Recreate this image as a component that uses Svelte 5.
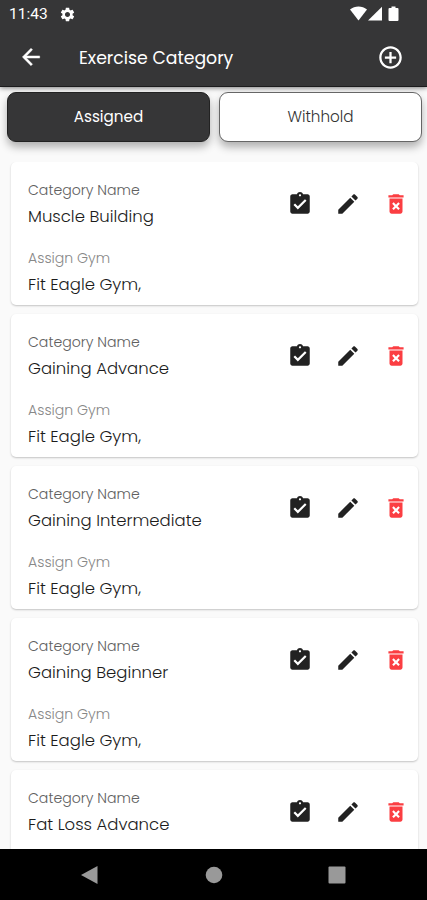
<script>
	const categories = [
		{ name: 'Muscle Building', gym: 'Fit Eagle Gym,' },
		{ name: 'Gaining Advance', gym: 'Fit Eagle Gym,' },
		{ name: 'Gaining Intermediate', gym: 'Fit Eagle Gym,' },
		{ name: 'Gaining Beginner', gym: 'Fit Eagle Gym,' },
		{ name: 'Fat Loss Advance' }
	];
	let tab = $state('assigned');
</script>

<div class="screen">
	<header>
		<div class="status">
			<span class="time">11:43</span>
			<svg class="gear" viewBox="0 0 24 24">
				<path
					d="M19.14 12.94c.04-.3.06-.61.06-.94 0-.32-.02-.64-.07-.94l2.03-1.58c.18-.14.23-.41.12-.61l-1.92-3.32c-.12-.22-.37-.29-.59-.22l-2.39.96c-.5-.38-1.03-.7-1.62-.94L14.4 2.81c-.04-.24-.24-.41-.48-.41h-3.84c-.24 0-.43.17-.47.41L9.25 5.35c-.59.24-1.13.57-1.62.94l-2.39-.96c-.22-.08-.47 0-.59.22L2.74 8.87c-.12.21-.08.47.12.61l2.03 1.58c-.05.3-.09.63-.09.94s.02.64.07.94l-2.03 1.58c-.18.14-.23.41-.12.61l1.92 3.32c.12.22.37.29.59.22l2.39-.96c.5.38 1.03.7 1.62.94l.36 2.54c.05.24.24.41.48.41h3.84c.24 0 .44-.17.47-.41l.36-2.54c.59-.24 1.13-.56 1.62-.94l2.39.96c.22.08.47 0 .59-.22l1.92-3.32c.12-.22.07-.47-.12-.61l-2.01-1.58zM12 15.6c-1.98 0-3.6-1.62-3.6-3.6s1.62-3.6 3.6-3.6 3.6 1.62 3.6 3.6-1.62 3.6-3.6 3.6z"
				/>
			</svg>
			<svg class="signals" viewBox="0 0 50 16">
				<path d="M0 3.5C4.8-.5 12.2-.5 17 3.5L8.5 14.5z" />
				<path d="M18 14.5L32 .8v13.7z" />
				<path d="M39.5 2h2V.6h4V2h2q1 0 1 1v11q0 1-1 1h-8q-1 0-1-1V3q0-1 1-1z" />
			</svg>
		</div>
		<div class="bar">
			<svg class="back" viewBox="0 0 24 24">
				<path d="M20 11H7.83l5.59-5.59L12 4l-8 8 8 8 1.41-1.41L7.83 13H20v-2z" />
			</svg>
			<h1>Exercise Category</h1>
			<svg class="add" viewBox="0 0 24 24">
				<path
					d="M13 7h-2v4H7v2h4v4h2v-4h4v-2h-4V7zm-1-5C6.48 2 2 6.48 2 12s4.48 10 10 10 10-4.48 10-10S17.52 2 12 2zm0 18c-4.41 0-8-3.59-8-8s3.59-8 8-8 8 3.59 8 8-3.59 8-8 8z"
				/>
			</svg>
		</div>
	</header>

	<div class="tabs">
		<button class:active={tab === 'assigned'} onclick={() => (tab = 'assigned')}>Assigned</button>
		<button class:active={tab === 'withhold'} onclick={() => (tab = 'withhold')}>Withhold</button>
	</div>

	<main>
		{#each categories as category (category.name)}
			<article>
				<div class="info">
					<p class="label">Category Name</p>
					<p class="value">{category.name}</p>
					{#if category.gym}
						<p class="label light">Assign Gym</p>
						<p class="value">{category.gym}</p>
					{/if}
				</div>
				<div class="actions">
					<svg viewBox="0 0 24 24">
						<path
							d="M19 3h-4.18C14.4 1.84 13.3 1 12 1c-1.3 0-2.4.84-2.82 2H5c-1.1 0-2 .9-2 2v14c0 1.1.9 2 2 2h14c1.1 0 2-.9 2-2V5c0-1.1-.9-2-2-2zm-7 0c.55 0 1 .45 1 1s-.45 1-1 1-1-.45-1-1 .45-1 1-1zm-2 14l-4-4 1.41-1.41L10 14.17l6.59-6.59L18 9l-8 8z"
						/>
					</svg>
					<svg viewBox="0 0 24 24">
						<path
							d="M3 17.25V21h3.75L17.81 9.94l-3.75-3.75L3 17.25zM20.71 7.04c.39-.39.39-1.02 0-1.41l-2.34-2.34c-.39-.39-1.02-.39-1.41 0l-1.83 1.83 3.75 3.75 1.83-1.83z"
						/>
					</svg>
					<svg class="delete" viewBox="0 0 24 24">
						<path
							d="M6 19c0 1.1.9 2 2 2h8c1.1 0 2-.9 2-2V7H6v12zm2.46-7.12l1.41-1.41L12 12.59l2.12-2.12 1.41 1.41L13.41 14l2.12 2.12-1.41 1.41L12 15.41l-2.12 2.12-1.41-1.41L10.59 14l-2.13-2.12zM15.5 4l-1-1h-5l-1 1H5v2h14V4z"
						/>
					</svg>
				</div>
			</article>
		{/each}
	</main>

	<nav>
		<svg viewBox="0 0 20 20"><path d="M1 10L17.5 1v18z" /></svg>
		<svg viewBox="0 0 20 20"><circle cx="10" cy="10" r="8.3" /></svg>
		<svg viewBox="0 0 20 20"><rect x="1.5" y="1.5" width="17" height="17" rx="1" /></svg>
	</nav>
</div>

<style>
	:global(body) {
		margin: 0;
	}

	.screen {
		display: flex;
		flex-direction: column;
		width: 427px;
		height: 900px;
		overflow: hidden;
		background: #fafafa;
		font-family: Poppins, Inter, sans-serif;
	}

	header {
		flex: none;
		box-sizing: border-box;
		height: 87px;
		border-bottom: 1px solid #1c1c1d;
		background: #363637;
		color: #fff;
		box-shadow: 0 1px 5px rgba(0, 0, 0, 0.5);
	}

	header svg {
		fill: #fff;
	}

	.status {
		display: flex;
		align-items: center;
		height: 28px;
		padding: 0 27px 0 9px;
	}

	.time {
		width: 50px;
		font: 15.5px/28px Roboto, sans-serif;
	}

	.gear {
		width: 17px;
		height: 17px;
	}

	.signals {
		width: 50px;
		height: 16px;
		margin-left: auto;
	}

	.bar {
		display: flex;
		align-items: center;
		height: 58px;
		padding: 0 23px 0 18px;
	}

	.back {
		width: 26px;
		height: 26px;
		stroke: #fff;
		stroke-width: 0.4;
	}

	h1 {
		flex: 1;
		margin: 1px 0 0 35px;
		font-size: 17.3px;
		font-weight: 400;
	}

	.add {
		width: 27px;
		height: 27px;
	}

	.tabs {
		display: grid;
		grid-template-columns: 1fr 1fr;
		gap: 9px;
		padding: 5px 5px 20px 7px;
	}

	button {
		height: 50px;
		padding: 0 0 2px;
		border: 1px solid #666;
		border-radius: 9px;
		background: #fff;
		color: #333;
		font: 300 15.2px Poppins, Inter, sans-serif;
		box-shadow: 0 5px 9px rgba(0, 0, 0, 0.3);
	}

	button.active {
		border-color: #222;
		background: #363637;
		color: #fff;
		font-weight: 400;
	}

	main {
		display: flex;
		flex: 1;
		flex-direction: column;
		gap: 9px;
		min-height: 0;
		padding: 0 9px 0 11px;
		overflow: hidden;
	}

	article {
		display: flex;
		flex: none;
		justify-content: space-between;
		box-sizing: border-box;
		height: 143px;
		padding: 16px 9px 0 17px;
		border-radius: 5px;
		background: #fff;
		box-shadow: 0 1px 2px rgba(0, 0, 0, 0.22);
	}

	p {
		margin: 0;
		white-space: nowrap;
	}

	.label {
		color: #606060;
		font-size: 14.1px;
		font-weight: 300;
		line-height: 24px;
	}

	.light {
		margin-top: 15px;
		color: #888;
	}

	.value {
		color: #1c1c1c;
		font-size: 16.5px;
		font-weight: 300;
		line-height: 29px;
	}

	.actions {
		display: flex;
		gap: 22px;
		padding-top: 13px;
	}

	.actions svg {
		width: 26px;
		height: 26px;
		fill: #222;
	}

	.actions .delete {
		fill: #fb3e42;
	}

	nav {
		display: flex;
		flex: none;
		align-items: center;
		justify-content: space-between;
		box-sizing: border-box;
		height: 51px;
		padding: 0 80px;
		background: #000;
	}

	nav svg {
		width: 20px;
		height: 20px;
		fill: #999;
	}
</style>
